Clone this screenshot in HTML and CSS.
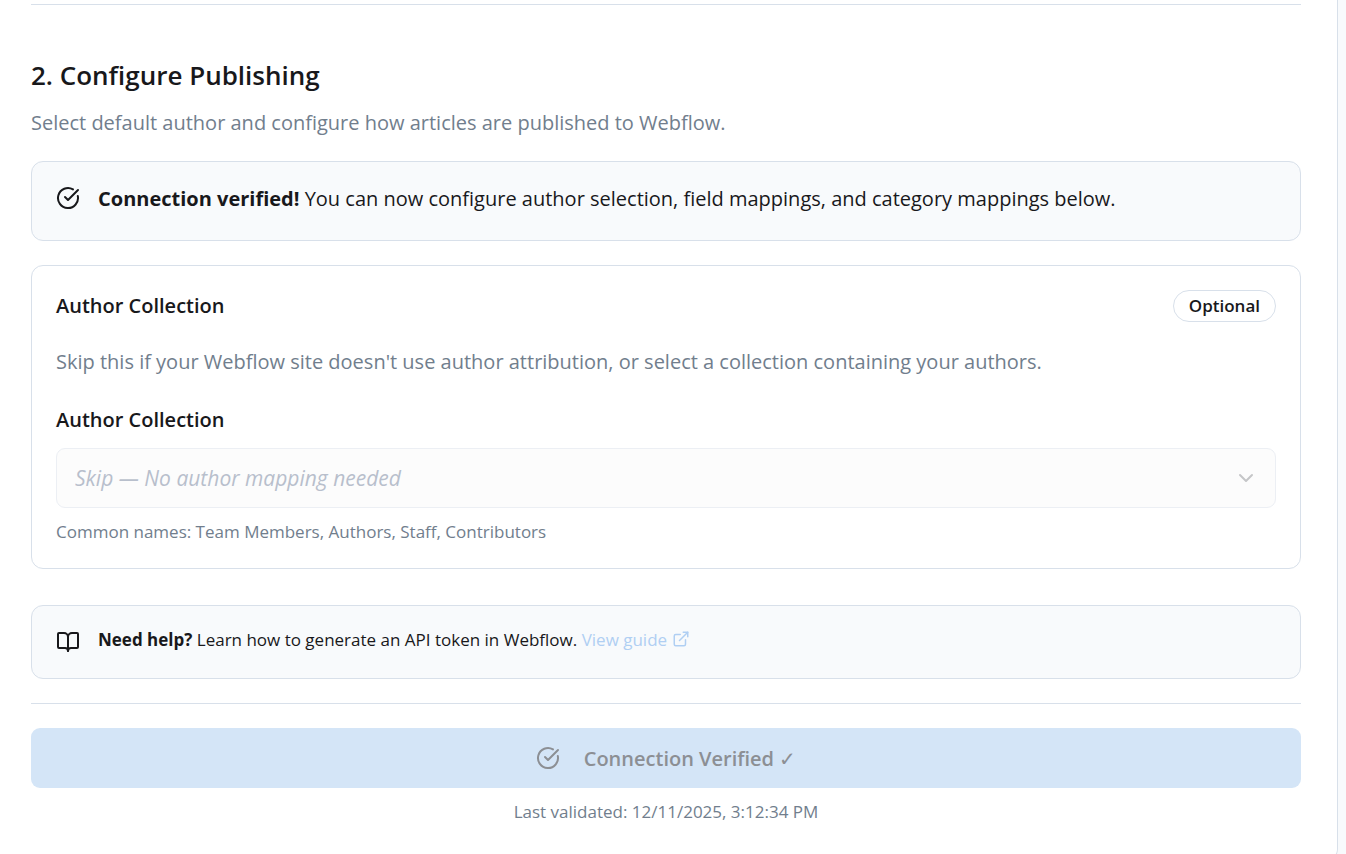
FILE: index.html
```html
<!DOCTYPE html>
<html lang="en">
<head>
    <meta charset="UTF-8">
    <meta name="viewport" content="width=device-width, initial-scale=1.0">
    <title>Webflow Integration</title>
    <link rel="stylesheet" href="styles.css">
</head>
<body>

<main class="panel">
    <hr class="divider">

    <!-- Step 2 -->
    <section class="step">
        <h2>2. Configure Publishing</h2>
        <p class="step-text">Select default author and configure how articles are published to Webflow.</p>

        <div class="alert">
            <svg class="icon" viewBox="0 0 24 24" aria-hidden="true">
                <path d="M21.801 10A10 10 0 1 1 17 3.335"/>
                <path d="m9 11 3 3L22 4"/>
            </svg>
            <p><strong>Connection verified!</strong> You can now configure author selection, field mappings, and category mappings below.</p>
        </div>

        <div class="card">
            <div class="card-header">
                <h3>Author Collection</h3>
                <span class="badge">Optional</span>
            </div>
            <p class="card-text">Skip this if your Webflow site doesn't use author attribution, or select a collection containing your authors.</p>

            <label for="author-collection">Author Collection</label>
            <div class="select-wrap">
                <select id="author-collection" disabled>
                    <option>Skip — No author mapping needed</option>
                </select>
                <svg class="icon chevron" viewBox="0 0 24 24" aria-hidden="true">
                    <path d="m6 9 6 6 6-6"/>
                </svg>
            </div>
            <p class="hint">Common names: Team Members, Authors, Staff, Contributors</p>
        </div>
    </section>

    <!-- Help -->
    <div class="alert alert-small">
        <svg class="icon" viewBox="0 0 24 24" aria-hidden="true">
            <path d="M12 7v14"/>
            <path d="M3 18a1 1 0 0 1-1-1V4a1 1 0 0 1 1-1h5a4 4 0 0 1 4 4 4 4 0 0 1 4-4h5a1 1 0 0 1 1 1v13a1 1 0 0 1-1 1h-6a3 3 0 0 0-3 3 3 3 0 0 0-3-3z"/>
        </svg>
        <p><strong>Need help?</strong> Learn how to generate an API token in Webflow.
            <a href="#">View guide <svg class="icon icon-link" viewBox="0 0 24 24" aria-hidden="true"><path d="M15 3h6v6"/><path d="M10 14 21 3"/><path d="M18 13v6a2 2 0 0 1-2 2H5a2 2 0 0 1-2-2V8a2 2 0 0 1 2-2h6"/></svg></a></p>
    </div>

    <hr class="divider">

    <button type="button" class="verify-btn" disabled>
        <svg class="icon" viewBox="0 0 24 24" aria-hidden="true">
            <path d="M21.801 10A10 10 0 1 1 17 3.335"/>
            <path d="m9 11 3 3L22 4"/>
        </svg>
        <span>Connection Verified <span class="tick">✓</span></span>
    </button>
    <p class="validated">Last validated: 12/11/2025, 3:12:34 PM</p>
</main>

</body>
</html>
```
FILE: styles.css
```css
* {
    margin: 0;
    padding: 0;
    box-sizing: border-box;
}

body {
    font-family: 'Open Sans', 'Noto Sans', sans-serif;
    font-size: 20px;
    line-height: 32px;
    color: #18181b;
    background-color: #f8fafc;
    padding-right: 8px;
}

/* Panel */
.panel {
    padding: 4px 36px 36px 31px;
    background-color: #ffffff;
    border-right: 1px solid #d8e0ea;
    border-bottom: 1px solid #d8e0ea;
    border-bottom-right-radius: 12px;
}

.divider {
    border: none;
    border-top: 1px solid #d8e0ea;
}

.icon {
    flex-shrink: 0;
    width: 24px;
    height: 24px;
    fill: none;
    stroke: currentColor;
    stroke-width: 2;
    stroke-linecap: round;
    stroke-linejoin: round;
}

/* Step */
.step {
    padding: 52px 0 36px;
}

h2 {
    font-size: 26px;
    line-height: 36px;
    font-weight: 600;
    margin-bottom: 14px;
}

.step-text {
    color: #717e8d;
    margin-bottom: 22px;
}

/* Alerts */
.alert {
    display: flex;
    gap: 18px;
    padding: 20px 24px 24px;
    line-height: 34px;
    background-color: #f8fafc;
    border: 1px solid #d8e0ea;
    border-radius: 12px;
}

.alert .icon {
    margin-top: 4px;
}

.alert-small {
    margin-bottom: 24px;
    font-size: 17px;
    line-height: 28px;
}

.alert a {
    color: #b0cff3;
    text-decoration: none;
}

.alert .icon-link {
    width: 18px;
    height: 18px;
    margin: 0;
    vertical-align: -2px;
}

/* Card */
.card {
    margin-top: 24px;
    padding: 24px;
    border: 1px solid #d8e0ea;
    border-radius: 12px;
}

.card-header {
    display: flex;
    justify-content: space-between;
    align-items: center;
    margin-bottom: 24px;
}

h3,
label {
    font-size: 20px;
    font-weight: 600;
}

.badge {
    padding: 0 15px;
    font-size: 17px;
    line-height: 30px;
    font-weight: 600;
    border: 1px solid #d8e0ea;
    border-radius: 16px;
}

.card-text {
    color: #717e8d;
    margin-bottom: 26px;
}

label {
    display: block;
    margin-bottom: 12px;
}

.select-wrap {
    position: relative;
}

select {
    display: block;
    width: 100%;
    height: 60px;
    padding: 0 18px;
    font-family: inherit;
    font-size: 21px;
    font-style: italic;
    color: #b8bfcc;
    background-color: #fcfcfc;
    border: 1px solid #eceff4;
    border-radius: 9px;
    appearance: none;
    opacity: 1;
}

.chevron {
    position: absolute;
    top: 18px;
    right: 18px;
    color: #c5c6c8;
}

.hint,
.validated {
    margin-top: 12px;
    font-size: 17px;
    line-height: 24px;
    color: #717e8d;
}

/* Footer */
.verify-btn {
    display: flex;
    justify-content: center;
    align-items: center;
    gap: 24px;
    width: 100%;
    height: 60px;
    margin-top: 24px;
    font-family: inherit;
    font-size: 20px;
    font-weight: 600;
    color: #8c8f94;
    background-color: #d4e5f7;
    border: none;
    border-radius: 9px;
}

.tick {
    font-weight: 400;
}

.validated {
    text-align: center;
}
```
